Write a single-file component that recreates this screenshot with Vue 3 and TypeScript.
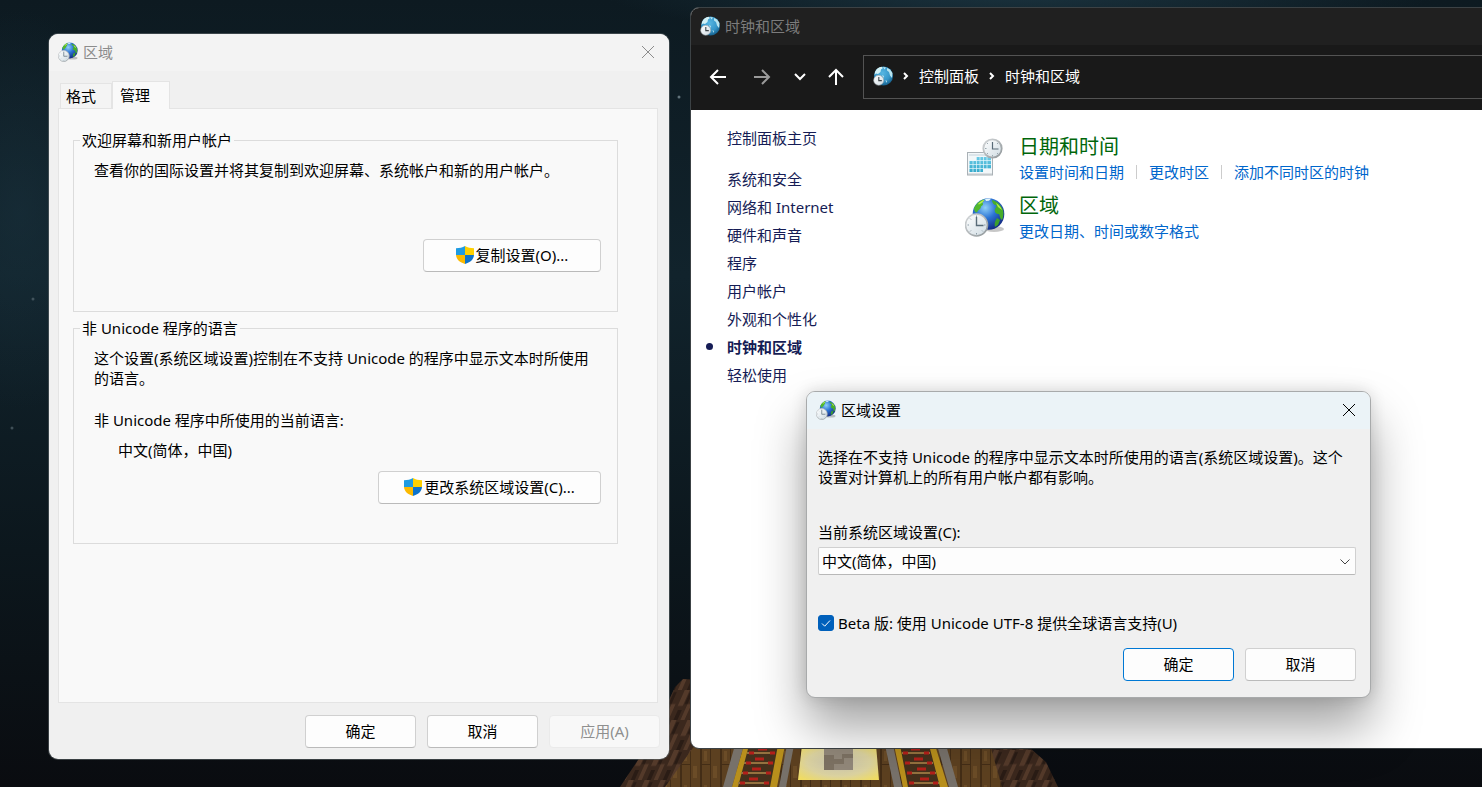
<script setup lang="ts">
import { ref } from 'vue'

const sidebarLinks: { text: string; current?: boolean }[] = [
  { text: '系统和安全' },
  { text: '网络和 Internet' },
  { text: '硬件和声音' },
  { text: '程序' },
  { text: '用户帐户' },
  { text: '外观和个性化' },
  { text: '时钟和区域', current: true },
  { text: '轻松使用' },
]

const categories = [
  { icon: '#icon-calendar', title: '日期和时间', tasks: ['设置时间和日期', '更改时区', '添加不同时区的时钟'] },
  { icon: '#icon-region', title: '区域', tasks: ['更改日期、时间或数字格式'] },
]

const locales = ['中文(简体，中国)']
const locale = ref(locales[0])
const utf8 = ref(true)

const sleepers = Array.from({ length: 4 }, (_, i) => i)
</script>

<template>
  <div class="desktop">
    <svg class="symbols" width="0" height="0" aria-hidden="true">
      <defs>
        <radialGradient id="g-earth" cx="0.4" cy="0.3" r="0.75">
          <stop offset="0" stop-color="#8fd0f8" />
          <stop offset="0.45" stop-color="#2c74d4" />
          <stop offset="1" stop-color="#10247c" />
        </radialGradient>
        <radialGradient id="g-sky" cx="0.45" cy="0.35" r="0.7">
          <stop offset="0" stop-color="#57b6e2" />
          <stop offset="0.6" stop-color="#3595c8" />
          <stop offset="1" stop-color="#0f5580" />
        </radialGradient>
        <linearGradient id="g-dial" x1="0" y1="0" x2="1" y2="1">
          <stop offset="0" stop-color="#ffffff" />
          <stop offset="1" stop-color="#cfdbe2" />
        </linearGradient>
        <linearGradient id="g-rim" x1="0" y1="0" x2="1" y2="1">
          <stop offset="0" stop-color="#d5d8da" />
          <stop offset="1" stop-color="#8f9699" />
        </linearGradient>
        <linearGradient id="g-cells" x1="0" y1="0" x2="0" y2="1">
          <stop offset="0" stop-color="#6ccbe6" />
          <stop offset="1" stop-color="#36aacb" />
        </linearGradient>
      </defs>
      <symbol id="icon-region" viewBox="0 0 40 40">
        <ellipse cx="29" cy="32" rx="10" ry="3" fill="#000" opacity="0.22" />
        <circle cx="23.5" cy="17" r="15.8" fill="url(#g-earth)" />
        <path d="M9 11c2-4 5-7 9-8.500 2 .5 1 2-1 3 2 1 1 3-1 4 0 3-3 3-4 6-2 0-3-2-3-4.500z" fill="#52b82e" />
        <path d="M27 3c5 1 9 5 11 10 1 4 0 8-1 10-2-1-2-4-3-6-3 0-5-2-4-5 1-2 2-2 1-4-2 0-4-2-4-5z" fill="#46ad2b" />
        <path d="M32 21l3 2-2 5-3 2c-1-3 0-6 2-9z" fill="#3c9f2c" />
        <path d="M13 7c2-2 4-4 7-4.500-2 2-3 4-6 5zM31 6c3 2 5 4 6 7l-4-3z" fill="#b7ed4a" />
        <path d="M20 2c2-.7 4-.7 6-.3l-2 2-3 .3z" fill="#e4f5fb" />
        <circle cx="11.5" cy="28" r="11" fill="url(#g-dial)" stroke="url(#g-rim)" stroke-width="1.6" />
        <path d="M11.5 20v8.5h7" fill="none" stroke="#596b78" stroke-width="1.4" />
        <path d="M11.5 18.5v1.5M11.5 36v1.5M2.5 28H4M19 28h1.5M5 21.5l1 1M18 34.5l-1-1M5 34.5l1-1" stroke="#8b9ba5" stroke-width="1" />
      </symbol>
      <symbol id="icon-clock-globe" viewBox="0 0 20 20">
        <circle cx="10.5" cy="10" r="9.5" fill="url(#g-sky)" />
        <path d="M2 6C3 3 6 1 8.500.8L10 2 8 3.500 7.500 6 5 8 3 7.500 1.500 9z" fill="#d3f1f5" />
        <path d="M14 2l3 1.500L19.500 7 19 12l-2-2.500L16 6l-2-1.500zM10 1l3 .5-1.500 2zM9 9l2 1-.5 2zM12.500 14l1.500 1-.5 2z" fill="#b9e4ef" />
        <circle cx="5.700" cy="14.300" r="5" fill="url(#g-dial)" stroke="#98a2a7" stroke-width="0.600" />
        <path d="M5.800 11v3.600h3" fill="none" stroke="#3c4347" stroke-width="1.100" />
      </symbol>
      <symbol id="icon-calendar" viewBox="0 0 40 40">
        <rect x="2.500" y="14.500" width="25" height="22.500" fill="#f3f7f9" stroke="#aab1b6" />
        <path d="M3 35.500h24v1.500H3z" fill="#c2c8cc" />
        <path d="M4 16h16v2H4z" fill="#dce5ea" />
        <path d="M11 19h15v12H11zM4.500 23H11v11H4.500zM11 30h7v4h-7z" fill="url(#g-cells)" />
        <path d="M4 22.500h22M4 26.500h22M4 30.500h22M8 19v15M11.500 19v15M15 19v15M18.500 19v15M22 19v12" stroke="#e8f8fc" stroke-width="0.700" />
        <circle cx="27.500" cy="10.500" r="9.200" fill="url(#g-dial)" stroke="url(#g-rim)" stroke-width="1.800" />
        <path d="M27.500 4v7h6" fill="none" stroke="#586a77" stroke-width="1.200" />
        <path d="M27.500 17v1.500M20 10.500h1.500M22 5l1 1M33 16l-1-1M22 16l1-1M33 5l-1 1" stroke="#91a0a8" stroke-width="0.900" />
      </symbol>
      <symbol id="icon-shield" viewBox="0 0 18 18">
        <path d="M9 0C6.500 1.600 3.500 2.200 0 2.200V9h9z" fill="#1e9be2" />
        <path d="M9 0c2.500 1.600 5.500 2.200 9 2.200V9H9z" fill="#fdd000" />
        <path d="M0 9c.3 4.500 4 7.500 9 9V9z" fill="#fbb900" />
        <path d="M18 9c-.3 4.500-4 7.500-9 9V9z" fill="#0d73cc" />
      </symbol>
    </svg>

    <svg class="wallpaper" viewBox="0 0 1482 787" preserveAspectRatio="xMidYMax slice" aria-hidden="true">
      <defs>
        <linearGradient id="w-night" x1="0" y1="0" x2="0" y2="1">
          <stop offset="0" stop-color="#0d1a21" />
          <stop offset="0.350" stop-color="#11232c" />
          <stop offset="0.700" stop-color="#0c171d" />
          <stop offset="1" stop-color="#0a0c10" />
        </linearGradient>
        <radialGradient id="w-glow">
          <stop offset="0" stop-color="#1b3440" />
          <stop offset="1" stop-color="#1b3440" stop-opacity="0" />
        </radialGradient>
        <pattern id="w-planks" width="20" height="34" patternUnits="userSpaceOnUse">
          <rect width="20" height="34" fill="#5c4020" />
          <path d="M0 0h2v34H0zM10 0h1v34h-1zM2 16h8v1H2z" fill="#432d16" />
          <path d="M4 3h3v10H4zM13 18h4v12h-4z" fill="#6b4c27" />
        </pattern>
        <pattern id="w-bark" width="16" height="30" patternUnits="userSpaceOnUse" patternTransform="skewX(-24)">
          <rect width="16" height="30" fill="#3b281d" />
          <path d="M0 0h5v16H0zM9 14h4v16H9z" fill="#543a2a" />
          <path d="M6 2h3v12H6zM2 20h4v10H2z" fill="#2a1c15" />
        </pattern>
        <radialGradient id="w-lamp" cx="0.500" cy="0.500" r="0.650">
          <stop offset="0" stop-color="#c9c4b0" />
          <stop offset="0.600" stop-color="#dcd3a0" />
          <stop offset="1" stop-color="#f0dc62" />
        </radialGradient>
      </defs>
      <rect width="1482" height="787" fill="url(#w-night)" />
      <ellipse cx="1020" cy="-10" rx="420" ry="50" fill="url(#w-glow)" />
      <ellipse cx="20" cy="210" rx="110" ry="200" fill="url(#w-glow)" opacity="0.500" />
      <g fill="#60727a">
        <circle cx="679" cy="97" r="1.500" />
        <circle cx="33" cy="299" r="1.500" opacity="0.600" />
        <circle cx="12" cy="428" r="1.500" opacity="0.600" />
      </g>
      <path d="M620 787l30-45 25-55 8-8 17 1v68h330l16 14 12 25z" fill="url(#w-bark)" />
      <path d="M695 745h295l12 42H665z" fill="url(#w-planks)" />
      <g fill="#77716a">
        <path d="M735 745h9l-12 42h-9zM787 745h7l-8 42h-7zM885 745h8l9 42h-8zM937 745h9l12 42h-9z" />
      </g>
      <path d="M744 745h41l-8 42h-45zM894 745h41l13 42h-45z" fill="#b88f1c" />
      <path d="M749 745h29l-8 42h-32zM900 745h29l11 42h-32z" fill="#44301c" />
      <g v-for="i in sleepers" :key="i">
        <path :d="`M${747 - i * 3} ${753 + i * 10}h28M${902 + i * 3} ${753 + i * 10}h28`" stroke="#94713f" stroke-width="2" />
        <path :d="`M${758 - i * 3} ${749 + i * 10}h9M${911 + i * 3} ${749 + i * 10}h9M${749 - i * 3} ${753 + i * 10}h5M${770 - i * 2} ${753 + i * 10}h5M${903 + i * 2} ${753 + i * 10}h5M${924 + i * 3} ${753 + i * 10}h5`" stroke="#b3201a" stroke-width="3" />
      </g>
      <path d="M802 745h74l3 35h-81z" fill="url(#w-lamp)" />
      <path d="M824 745h29v25h-29z" fill="#92887a" />
      <path d="M824 755h10v4h8v-5h11v4h-9v6h-10v6h-10z" fill="#7d7263" />
    </svg>

    <section class="window explorer" aria-label="时钟和区域">
      <header class="titlebar explorer-title">
        <svg class="icon20"><use href="#icon-clock-globe" /></svg>
        <span>时钟和区域</span>
      </header>
      <nav class="navbar" aria-label="导航">
        <button class="nav-btn" type="button" aria-label="后退">
          <svg viewBox="0 0 18 18"><path d="M17 9H2M9 2L2 9l7 7" /></svg>
        </button>
        <button class="nav-btn forward" type="button" aria-label="前进">
          <svg viewBox="0 0 18 18"><path d="M1 9h15M9 2l7 7-7 7" /></svg>
        </button>
        <button class="nav-btn recent" type="button" aria-label="最近位置">
          <svg viewBox="0 0 18 18"><path d="M4 6l5 5 5-5" /></svg>
        </button>
        <button class="nav-btn up" type="button" aria-label="上移">
          <svg viewBox="0 0 18 18"><path d="M9 17V2M2 9l7-7 7 7" /></svg>
        </button>
        <div class="address">
          <svg class="icon20"><use href="#icon-clock-globe" /></svg>
          <svg class="crumb-sep" viewBox="0 0 8 10"><path d="M2 2l3 3-3 3" /></svg>
          <a href="#">控制面板</a>
          <svg class="crumb-sep" viewBox="0 0 8 10"><path d="M2 2l3 3-3 3" /></svg>
          <a href="#">时钟和区域</a>
        </div>
      </nav>
      <div class="explorer-body">
        <aside class="sidebar">
          <a class="home" href="#">控制面板主页</a>
          <ul>
            <li v-for="link in sidebarLinks" :key="link.text" :class="{ current: link.current }">
              <a href="#">{{ link.text }}</a>
            </li>
          </ul>
        </aside>
        <main class="categories">
          <article v-for="cat in categories" :key="cat.title" class="category">
            <svg class="icon40"><use :href="cat.icon" /></svg>
            <div>
              <h2><a href="#">{{ cat.title }}</a></h2>
              <div class="tasks">
                <a v-for="task in cat.tasks" :key="task" href="#">{{ task }}</a>
              </div>
            </div>
          </article>
        </main>
      </div>
    </section>

    <section class="window region" role="dialog" aria-label="区域">
      <header class="titlebar region-title">
        <svg class="icon20"><use href="#icon-region" /></svg>
        <span>区域</span>
        <button class="close" type="button" aria-label="关闭">
          <svg viewBox="0 0 12 12"><path d="M0 0l12 12M12 0L0 12" /></svg>
        </button>
      </header>
      <div class="tabs" role="tablist">
        <button class="tab" type="button" role="tab" aria-selected="false">格式</button>
        <button class="tab active" type="button" role="tab" aria-selected="true">管理</button>
      </div>
      <div class="tab-panel" role="tabpanel">
        <fieldset class="group">
          <legend>欢迎屏幕和新用户帐户</legend>
          <p>查看你的国际设置并将其复制到欢迎屏幕、系统帐户和新的用户帐户。</p>
          <button class="btn copy" type="button">
            <svg class="shield"><use href="#icon-shield" /></svg>复制设置(O)...
          </button>
        </fieldset>
        <fieldset class="group">
          <legend>非 Unicode 程序的语言</legend>
          <p>这个设置(系统区域设置)控制在不支持 Unicode 的程序中显示文本时所使用的语言。</p>
          <p class="label">非 Unicode 程序中所使用的当前语言:</p>
          <p class="value">{{ locale }}</p>
          <button class="btn change" type="button">
            <svg class="shield"><use href="#icon-shield" /></svg>更改系统区域设置(C)...
          </button>
        </fieldset>
      </div>
      <footer class="actions">
        <button class="btn" type="button">确定</button>
        <button class="btn" type="button">取消</button>
        <button class="btn" type="button" disabled>应用(A)</button>
      </footer>
    </section>

    <section class="window settings" role="dialog" aria-label="区域设置">
      <header class="titlebar settings-title">
        <svg class="icon20"><use href="#icon-region" /></svg>
        <span>区域设置</span>
        <button class="close" type="button" aria-label="关闭">
          <svg viewBox="0 0 12 12"><path d="M0 0l12 12M12 0L0 12" /></svg>
        </button>
      </header>
      <div class="settings-body">
        <p>选择在不支持 Unicode 的程序中显示文本时所使用的语言(系统区域设置)。这个设置对计算机上的所有用户帐户都有影响。</p>
        <label class="field-label" for="locale">当前系统区域设置(C):</label>
        <div class="select-wrap">
          <select id="locale" v-model="locale">
            <option v-for="item in locales" :key="item">{{ item }}</option>
          </select>
          <svg class="chevron" viewBox="0 0 10 6"><path d="M0.500 0.500L5 5l4.500-4.500" /></svg>
        </div>
        <div class="check">
          <input id="utf8" v-model="utf8" type="checkbox" />
          <svg class="tick" viewBox="0 0 16 16"><path d="M4 8.500l2.700 2.700L12 5.500" /></svg>
          <label for="utf8">Beta 版: 使用 Unicode UTF-8 提供全球语言支持(U)</label>
        </div>
        <footer class="actions">
          <button class="btn primary" type="button">确定</button>
          <button class="btn" type="button">取消</button>
        </footer>
      </div>
    </section>
  </div>
</template>

<style>
body {
  margin: 0;
  background: #0b141a;
}
</style>

<style scoped>
.desktop {
  position: relative;
  min-height: 100vh;
  overflow: hidden;
  font: 15px/20px 'Noto Sans', 'Noto Sans CJK SC', sans-serif;
  color: #000;
}
.desktop *,
.desktop *::before {
  box-sizing: border-box;
}
.symbols {
  position: absolute;
}
.wallpaper {
  position: absolute;
  inset: 0;
  width: 100%;
  height: 100%;
}
button,
select {
  font: inherit;
  color: inherit;
}
a {
  color: inherit;
  text-decoration: none;
}
p,
h2,
ul {
  margin: 0;
  padding: 0;
  font: inherit;
  list-style: none;
}
.icon20 {
  flex: none;
  width: 20px;
  height: 20px;
}
.icon40 {
  flex: none;
  width: 40px;
  height: 40px;
}
.window {
  position: absolute;
  border-radius: 9px;
}
.titlebar {
  display: flex;
  align-items: center;
  gap: 5px;
  height: 37px;
  padding-bottom: 2px;
}
.close {
  margin-left: auto;
  width: 42px;
  height: 34px;
  padding: 0;
  border: 0;
  background: none;
}
.close svg {
  display: block;
  width: 12px;
  height: 12px;
  margin: 0 auto;
  overflow: visible;
  fill: none;
  stroke: currentColor;
}

/* Control panel */
.explorer {
  left: 690px;
  right: -12px;
  top: 7px;
  display: flex;
  flex-direction: column;
  overflow: hidden;
  border: 1px solid #3c4245;
  background: #fff;
}
.explorer-title {
  padding-left: 9px;
  background: #202020;
  color: #7c7c7c;
}
.navbar {
  display: flex;
  align-items: center;
  height: 65px;
  padding: 0 0 2px 18px;
  background: #191919;
  color: #fff;
}
.nav-btn {
  width: 18px;
  height: 18px;
  padding: 0;
  margin-right: 26px;
  border: 0;
  background: none;
}
.nav-btn svg,
.crumb-sep {
  display: block;
  width: 100%;
  fill: none;
  stroke: currentColor;
  stroke-width: 2;
}
.nav-btn.forward {
  margin-right: 20px;
  color: #9a9a9a;
}
.nav-btn.recent,
.nav-btn.up {
  margin-right: 18px;
}
.address {
  flex: 1;
  display: flex;
  align-items: center;
  height: 44px;
  padding: 0 0 2px 9px;
  border: 1px solid #535353;
}
.address .crumb-sep {
  width: 8px;
  height: 10px;
  margin: 0 9px;
}
.explorer-body {
  display: grid;
  grid-template-columns: 274px 1fr;
  padding: 14px 0 359px;
}
.sidebar {
  padding-left: 36px;
  color: #151c55;
}
.home {
  display: block;
  line-height: 28px;
  margin-bottom: 13px;
}
.sidebar li {
  position: relative;
  line-height: 28px;
}
.current {
  font-weight: 700;
}
.current::before {
  content: '';
  position: absolute;
  left: -21px;
  top: 10px;
  width: 7px;
  height: 7px;
  border-radius: 50%;
  background: #151c55;
}
.categories {
  padding-top: 10px;
}
.category {
  display: flex;
  gap: 14px;
  height: 59px;
}
.category .icon40 {
  margin-top: 4px;
}
.category h2 {
  font-size: 20px;
  line-height: 26px;
  color: #00660a;
}
.tasks {
  display: flex;
  line-height: 24px;
  color: #0066cc;
}
.tasks a + a::before {
  content: '';
  display: inline-block;
  width: 1px;
  height: 14px;
  margin: 0 12px;
  vertical-align: -1px;
  background: #ccc;
}

/* Region window */
.region {
  left: 49px;
  top: 34px;
  width: 620px;
  background: #f0f0f0;
  box-shadow: 0 0 0 1px rgba(90, 98, 102, 0.6);
}
.region-title {
  padding-left: 9px;
  border-radius: 9px 9px 0 0;
  background: #f3f3f3;
  color: #8c8c8c;
}
.tabs {
  display: flex;
  align-items: flex-end;
  height: 37px;
  padding-left: 11px;
}
.tab {
  width: 52px;
  height: 25px;
  padding: 0 0 0 5px;
  text-align: left;
  border: 1px solid #e4e4e4;
  border-bottom: 0;
  background: #f4f4f4;
}
.tab.active {
  position: relative;
  width: 58px;
  height: 28px;
  padding: 0 0 2px 7px;
  margin-bottom: -1px;
  background: #f9f9f9;
}
.tab-panel {
  height: 595px;
  margin: 0 11px 0 9px;
  padding: 21px 39px 0 14px;
  border: 1px solid #e4e4e4;
  background: #f9f9f9;
}
.group {
  position: relative;
  margin: 0 0 6px;
  padding: 10px 16px 39px 20px;
  border: 1px solid #dcdcdc;
  display: flow-root;
}
.group legend {
  margin-left: -14px;
  padding: 0 2px;
  line-height: 20px;
}
.group .btn {
  display: flex;
  align-items: center;
  justify-content: center;
  margin-left: auto;
}
.shield {
  width: 18px;
  height: 18px;
  margin-right: 2px;
}
.btn.copy {
  width: 178px;
  margin-top: 59px;
}
.btn.change {
  width: 223px;
  margin-top: 11px;
}
.label {
  margin-top: 22px;
}
.value {
  margin: 10px 0 0 24px;
}
.btn {
  width: 111px;
  height: 33px;
  padding: 0 0 2px;
  border: 1px solid #d0d0d0;
  border-bottom-color: #bababa;
  border-radius: 4px;
  background: #fdfdfd;
}
.btn.primary {
  border-color: #0078d4;
}
.btn:disabled {
  border-color: #eaeaea;
  background: #f8f8f8;
  color: #8f8f8f;
}
.actions {
  display: flex;
  justify-content: flex-end;
  gap: 11px;
}
.region .actions {
  padding: 12px 9px 11px;
}

/* Region settings dialog */
.settings {
  left: 806px;
  top: 391px;
  width: 565px;
  border: 1px solid #a8aaab;
  background: #f0f0f0;
  box-shadow: 0 30px 50px rgba(0, 0, 0, 0.36), 0 0 16px rgba(0, 0, 0, 0.14);
}
.settings-title {
  padding-left: 9px;
  border-radius: 8px 8px 0 0;
  background: #ebf3f7;
}
.settings-body {
  padding: 18px 14px 16px 11px;
}
.field-label {
  display: block;
  margin-top: 35px;
}
.select-wrap {
  position: relative;
  margin-top: 5px;
}
select {
  display: block;
  width: 100%;
  height: 28px;
  padding: 0 3px;
  border: 1px solid #d0d0d0;
  border-bottom-color: #b8b8b8;
  border-radius: 2px;
  background: #fdfdfd;
  appearance: none;
}
.chevron {
  position: absolute;
  right: 6px;
  top: 12px;
  width: 10px;
  height: 6px;
  fill: none;
  stroke: #444;
  pointer-events: none;
}
.check {
  position: relative;
  display: flex;
  align-items: center;
  gap: 4px;
  margin: 38px 0 15px;
}
.check input {
  width: 16px;
  height: 16px;
  margin: 0;
  border: 1px solid #868686;
  border-radius: 3px;
  background: #fdfdfd;
  appearance: none;
}
.check input:checked {
  border-color: #0060bb;
  background: #0060bb;
}
.tick {
  position: absolute;
  left: 0;
  top: 2px;
  width: 16px;
  height: 16px;
  fill: none;
  stroke: #fff;
  pointer-events: none;
}
</style>
